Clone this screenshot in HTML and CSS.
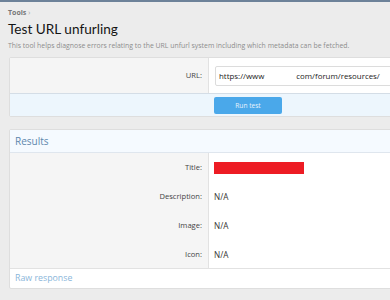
FILE: index.html
```html
<!DOCTYPE html>
<html>
<head>
<meta charset="utf-8">
<link rel="stylesheet" href="styles.css">
</head>
<body>
<div class="topbar"></div>
<div class="page">
  <div class="crumbs">Tools <span class="chev">›</span></div>
  <h1 class="title">Test URL unfurling</h1>
  <p class="desc">This tool helps diagnose errors relating to the URL unfurl system including which metadata can be fetched.</p>

  <div class="block">
    <div class="row form-row">
      <div class="label">URL:</div>
      <div class="value">
        <div class="input"><span>https://www</span><span class="gap"></span><span>com/forum/resources/</span></div>
      </div>
    </div>
    <div class="submit-row">
      <div class="label"></div>
      <div class="value"><button class="btn">Run test</button></div>
    </div>
  </div>

  <div class="block results">
    <div class="block-header">Results</div>
    <div class="rows">
      <div class="row">
        <div class="label">Title:</div>
        <div class="value"><span class="redact"></span></div>
      </div>
      <div class="row">
        <div class="label">Description:</div>
        <div class="value">N/A</div>
      </div>
      <div class="row">
        <div class="label">Image:</div>
        <div class="value">N/A</div>
      </div>
      <div class="row">
        <div class="label">Icon:</div>
        <div class="value">N/A</div>
      </div>
    </div>
    <div class="block-footer"><a class="raw">Raw response</a></div>
  </div>
</div>
</body>
</html>
```

FILE: styles.css
```css
html, body {
  margin: 0;
  padding: 0;
}
body {
  background: #ececec;
  font-family: "Open Sans", "Noto Sans", sans-serif;
  color: #141414;
  overflow: hidden;
  width: 390px;
  height: 300px;
}
.topbar {
  height: 2px;
  background: #6d8299;
}
.page {
  padding: 6px 0 0 9px;
}
.crumbs {
  font-size: 7px;
  font-weight: 700;
  color: #777;
  line-height: 9px;
  margin-left: -1px;
}
.chev {
  font-weight: 400;
  color: #999;
}
.title {
  font-family: "Lato", "Open Sans", sans-serif;
  font-size: 13.6px;
  font-weight: 400;
  margin: 2px 0 0 -1px;
  line-height: 20px;
  color: #141414;
}
.desc {
  font-size: 6.9px;
  color: #8c8c8c;
  margin: 2px 0 0 -1px;
  line-height: 10px;
  white-space: nowrap;
}
.block {
  width: 520px;
  border: 1px solid #dedede;
  border-radius: 2px;
  background: #fff;
  margin-top: 6px;
}
.row {
  display: flex;
}
.label {
  width: 199px;
  flex: none;
  background: #f5f5f5;
  border-right: 1px solid #e2e2e2;
  box-sizing: border-box;
  text-align: right;
  padding-right: 6px;
  font-size: 7.6px;
  color: #444;
}
.value {
  flex: 1;
  padding-left: 6px;
  font-size: 8.2px;
  color: #333;
}
.form-row {
  height: 35px;
  border-bottom: 1px solid #d4dde6;
}
.form-row .label {
  line-height: 35px;
}
.form-row .value {
  display: flex;
  align-items: center;
}
.input {
  width: 300px;
  height: 20px;
  border: 1px solid #dcdcdc;
  border-radius: 2px;
  box-sizing: border-box;
  font-size: 7.9px;
  line-height: 18px;
  padding-left: 3px;
  color: #222;
  display: flex;
}
.gap {
  width: 32px;
}
.submit-row {
  display: flex;
  height: 22px;
  background: #edf6fd;
}
.submit-row .label {
  background: transparent;
  border-right: none;
}
.submit-row .value {
  display: flex;
  align-items: center;
  padding-left: 5px;
}
.btn {
  width: 68px;
  height: 17px;
  border: none;
  border-radius: 2px;
  background: #4aa8ea;
  color: #e8f3fc;
  font-family: inherit;
  font-size: 6.6px;
  padding: 0;
}
.results {
  margin-top: 12px;
}
.block-header {
  height: 22px;
  line-height: 22px;
  background: #f5faff;
  border-bottom: 1px solid #dfe6ee;
  padding-left: 5px;
  font-size: 10px;
  color: #5d87ad;
}
.rows .row {
  height: 29px;
}
.rows .row:last-child {
  height: 28px;
}
.rows .label, .rows .value {
  line-height: 29px;
}
.rows .value {
  padding-left: 5px;
}
.redact {
  display: inline-block;
  width: 90px;
  height: 12px;
  background: #ed1c24;
  vertical-align: middle;
  margin-top: -2px;
}
.rows {
  border-bottom: 1px solid #e2e2e2;
}
.block-footer {
  height: 19px;
  line-height: 19px;
  padding-left: 5px;
  font-size: 8.8px;
}
.raw {
  color: #8ab6da;
}
```
